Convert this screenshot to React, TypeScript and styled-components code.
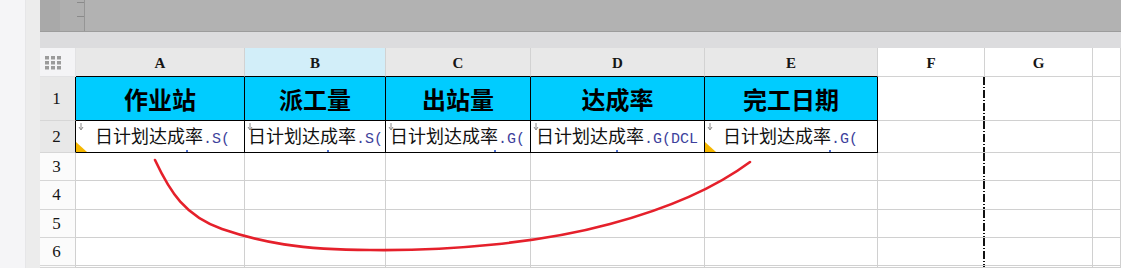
import React from 'react';
import styled, { createGlobalStyle, css } from 'styled-components';

const GlobalStyle = createGlobalStyle`
  html, body {
    margin: 0;
    padding: 0;
    overflow: hidden;
    background: #ffffff;
  }
  body {
    font-family: 'Noto Sans CJK SC', 'Noto Sans', sans-serif;
  }
`;

const Screen = styled.div`
  position: relative;
  display: flex;
  width: 1121px;
  height: 268px;
  overflow: hidden;
`;

const OuterRail = styled.div`
  width: 25px;
  flex: none;
  background: #f5f5f7;
`;

const InnerRail = styled.div`
  width: 15px;
  flex: none;
  background: #ececec;
  border-left: 1px solid #e6e6e8;
  box-sizing: border-box;
`;

const Workspace = styled.div`
  flex: 1;
  display: flex;
  flex-direction: column;
  min-width: 0;
`;

const TopBar = styled.div`
  height: 32px;
  flex: none;
  display: flex;
  background: #b2b2b2;
  border-bottom: 1px solid #9c9c9c;
  box-sizing: border-box;
`;

const TopBarLead = styled.div`
  width: 20px;
  background: #a9a9a9;
`;

const TabStub = styled.div`
  position: relative;
  width: 25px;
  background: #afafaf;
  border-right: 1px solid #959595;
  box-sizing: border-box;

  &::before,
  &::after {
    content: '';
    position: absolute;
    right: 0;
    width: 7px;
    height: 1px;
    background: #8a8a8a;
  }
  &::before { top: 2px; }
  &::after { top: 16px; }
`;

const Band = styled.div`
  height: 16px;
  flex: none;
  background: #dcdcde;
`;

const Sheet = styled.div`
  flex: 1;
  display: grid;
  grid-template-columns: 36px 169px 141px 145px 174px 173px 107px 108px 1fr;
  grid-template-rows: 29px 44px 32px 28px 29px 28px 28px 1fr;
  background: #ffffff;
`;

const Corner = styled.div`
  display: flex;
  align-items: center;
  justify-content: center;
  background: #f4f4f6;
  border-right: 1px solid #e2e2e4;
  border-bottom: 1px solid #e2e2e4;
  box-sizing: border-box;
  padding-right: 8px;
  padding-top: 2px;
`;

const headFont = css`
  font-family: 'Liberation Serif', 'DejaVu Serif', serif;
  color: #161616;
`;

const ColHead = styled.div<{ $selected?: boolean; $blank?: boolean; $boxed?: boolean }>`
  display: flex;
  align-items: center;
  justify-content: center;
  box-sizing: border-box;
  ${headFont};
  font-size: 15px;
  font-weight: 700;
  padding-top: 2px;
  background: ${p => (p.$selected ? '#d2eef9' : p.$blank ? '#ffffff' : '#e8e8e8')};
  border-right: 1px solid #d2d2d2;
  border-bottom: 1px solid ${p => (p.$boxed ? '#000000' : '#d2d2d2')};
`;

const RowHead = styled.div<{ $shaded?: boolean; $boxed?: boolean }>`
  display: flex;
  align-items: center;
  justify-content: center;
  box-sizing: border-box;
  ${headFont};
  font-size: 17px;
  font-weight: 400;
  padding-right: 2px;
  background: ${p => (p.$shaded ? '#e8e8e8' : '#fbfbfb')};
  border-right: 1px solid ${p => (p.$boxed ? '#000000' : '#d0d0d0')};
  border-bottom: 1px solid #d6d6d6;
`;

const Cell = styled.div<{ $boxed?: boolean; $fill?: boolean; $pageBreak?: boolean; $center?: boolean; $indent?: number }>`
  position: relative;
  display: flex;
  align-items: center;
  justify-content: ${p => (p.$center ? 'center' : 'flex-start')};
  padding-left: ${p => p.$indent ?? 0}px;
  box-sizing: border-box;
  overflow: hidden;
  white-space: nowrap;
  background: ${p => (p.$fill ? '#00ccff' : '#ffffff')};
  border-right: 1px solid ${p => (p.$boxed ? '#000000' : '#d0d0d0')};
  border-bottom: 1px solid ${p => (p.$boxed ? '#000000' : '#d0d0d0')};
  ${p =>
    p.$pageBreak &&
    css`
      border-right: none;
      background-image: repeating-linear-gradient(
        to bottom,
        #111 0 8px,
        transparent 8px 10px,
        #111 10px 11px,
        transparent 11px 13px
      );
      background-size: 2px 100%;
      background-position: right top;
      background-repeat: no-repeat;
    `}
`;

const TitleText = styled.span`
  font-family: 'Noto Sans CJK SC', 'Noto Sans', sans-serif;
  font-size: 24px;
  font-weight: 700;
  color: #000000;
  line-height: 1;
  padding-top: 1px;
`;

const FieldText = styled.span`
  font-family: 'Noto Sans CJK SC', 'Noto Sans', sans-serif;
  font-size: 18px;
  font-weight: 400;
  color: #111111;
  line-height: 1;
`;

const FieldCode = styled.span`
  font-family: 'Liberation Mono', 'DejaVu Sans Mono', monospace;
  font-size: 15px;
  color: #3d3f9c;
`;

const InputMark = styled.svg`
  position: absolute;
  left: 2px;
  top: 2px;
`;

const NoteTriangle = styled.div`
  position: absolute;
  left: 0;
  bottom: 0;
  width: 0;
  height: 0;
  border-left: 11px solid #f5b700;
  border-top: 10px solid transparent;
`;

const Speck = styled.div<{ $left: number }>`
  position: absolute;
  bottom: 0;
  left: ${p => p.$left}px;
  width: 2px;
  height: 2px;
  background: #4d6fd0;
`;

const Ink = styled.svg`
  position: absolute;
  left: 0;
  top: 0;
  pointer-events: none;
`;

const columns = ['A', 'B', 'C', 'D', 'E', 'F', 'G', ''];
const titles = ['作业站', '派工量', '出站量', '达成率', '完工日期'];

const fields = [
  { code: '.S(', indent: 19, note: true, speck: 110 },
  { code: '.S(', indent: 3, note: false, speck: 82 },
  { code: '.G(', indent: 4, note: false, speck: 108 },
  { code: '.G(DCL', indent: 5, note: false, speck: 85 },
  { code: '.G(', indent: 18, note: true, speck: 124 },
];

const GridIcon = () => (
  <svg width="17" height="14" viewBox="0 0 17 14">
    {[0, 1, 2].map(r =>
      [0, 1, 2].map(c => (
        <rect key={`${r}-${c}`} x={c * 6} y={r * 5} width="4" height="3.5" fill="#9b9b9b" />
      ))
    )}
  </svg>
);

const App: React.FC = () => {
  const tail = (from: number) =>
    [5, 6, 7].map(i => (
      <Cell key={`t${from}-${i}`} $pageBreak={i === 5} />
    ));

  return (
    <>
      <GlobalStyle />
      <Screen>
        <OuterRail />
        <InnerRail />
        <Workspace>
          <TopBar>
            <TopBarLead />
            <TabStub />
          </TopBar>
          <Band />
          <Sheet>
            <Corner>
              <GridIcon />
            </Corner>
            {columns.map((c, i) => (
              <ColHead key={`h${i}`} $selected={c === 'B'} $blank={i >= 5} $boxed={i < 5}>
                {c}
              </ColHead>
            ))}

            <RowHead $shaded $boxed>1</RowHead>
            {titles.map(t => (
              <Cell key={t} $boxed $fill $center>
                <TitleText>{t}</TitleText>
              </Cell>
            ))}
            {tail(1)}

            <RowHead $shaded $boxed>2</RowHead>
            {fields.map((f, i) => (
              <Cell key={`f${i}`} $boxed $indent={f.indent}>
                <InputMark width="6" height="8" viewBox="0 0 6 8">
                  <path d="M3 0 V6 M1 4 L3 7 L5 4" stroke="#8a8a8a" strokeWidth="1" fill="none" />
                </InputMark>
                <FieldText>
                  日计划达成率<FieldCode>{f.code}</FieldCode>
                </FieldText>
                {f.note && <NoteTriangle />}
                <Speck $left={f.speck} />
              </Cell>
            ))}
            {tail(2)}

            {[3, 4, 5, 6, 7].map(r => (
              <React.Fragment key={`r${r}`}>
                <RowHead>{r < 7 ? r : ''}</RowHead>
                {[0, 1, 2, 3, 4].map(i => (
                  <Cell key={`c${r}-${i}`} />
                ))}
                {tail(r)}
              </React.Fragment>
            ))}
          </Sheet>
        </Workspace>
        <Ink width="1121" height="268" viewBox="0 0 1121 268">
          <path
            d="M155,160 C170,192 185,216 222,229 C260,242 300,250 370,250 C450,251 540,243 610,224 C670,208 715,188 750,162"
            stroke="#e5202b"
            strokeWidth="2.6"
            strokeLinecap="round"
            fill="none"
          />
        </Ink>
      </Screen>
    </>
  );
};

export default App;
